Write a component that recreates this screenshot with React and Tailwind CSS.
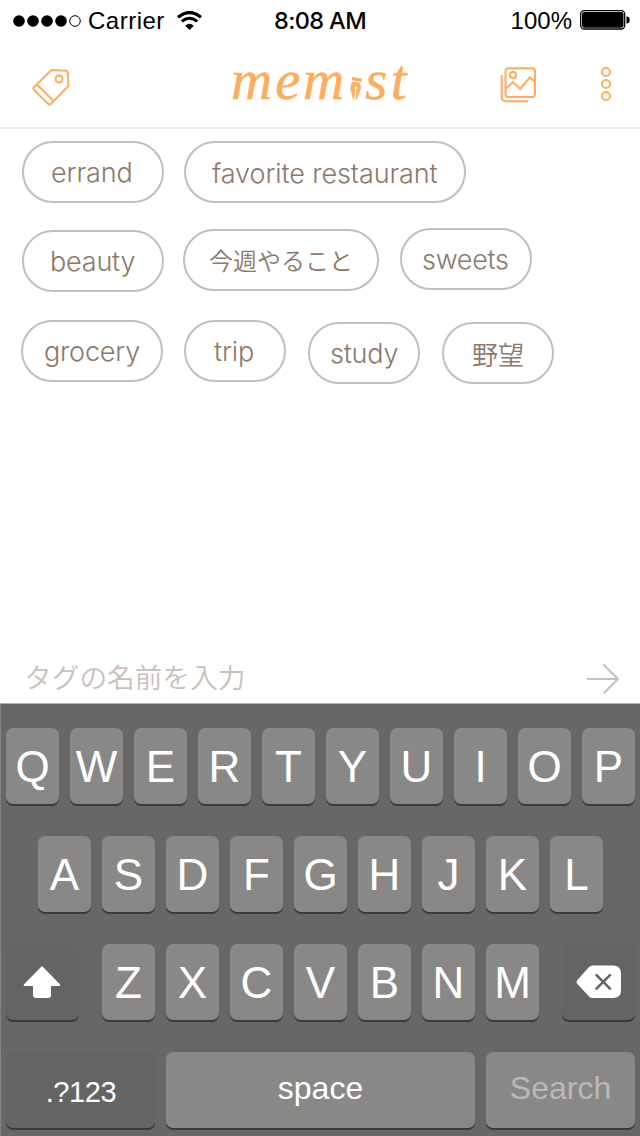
const latin = "font-['Inter','Liberation_Sans',sans-serif] font-light text-[27px]";
const cjk = "font-['Noto_Sans_CJK_JP',sans-serif] font-[350]";

const tagRows = [
  [
    { label: 'errand', box: 'w-[142px] mt-[3px]', text: `${latin} pl-[27px] pt-[10px] tracking-[-0.1px]` },
    { label: 'favorite restaurant', box: 'w-[282px] mt-[3px] ml-[20px]', text: `${latin} pl-[26px] pt-[11px] tracking-[-0.1px]` },
  ],
  [
    { label: 'beauty', box: 'w-[142px] mt-[3px]', text: `${latin} pl-[26px] pt-[10px] tracking-[-0.2px]` },
    { label: '今週やること', box: 'w-[196px] mt-[2px] ml-[19px]', text: `${cjk} text-[24px] pl-[24px] pt-[9px]` },
    { label: 'sweets', box: 'w-[132px] mt-[1px] ml-[21px]', text: `${latin} pl-[20px] pt-[10px] tracking-[-0.3px]` },
  ],
  [
    { label: 'grocery', box: 'w-[142px] mt-[3.5px] -ml-px', text: `${latin} pl-[21px] pt-[10px] tracking-[-0.2px]` },
    { label: 'trip', box: 'w-[102px] mt-[3.5px] ml-[21px]', text: `${latin} pl-[28px] pt-[10px] tracking-[-0.1px]` },
    { label: 'study', box: 'w-[112px] mt-[5.5px] ml-[22px]', text: `${latin} pl-[20px] pt-[10px] tracking-[-0.2px]` },
    { label: '野望', box: 'w-[112px] mt-[5.5px] ml-[22px]', text: `${cjk} text-[26px] pl-[28px] pt-[10px]` },
  ],
];

function Tag({ label, box, text }) {
  return (
    <button className={`h-[62px] shrink-0 rounded-full border-2 border-[#c5bdb6] text-left text-[#8b7869] ${box}`}>
      <span className={`block h-full whitespace-nowrap leading-[40px] ${text}`}>{label}</span>
    </button>
  );
}

function StatusBar() {
  return (
    <div className="grid h-10 grid-cols-3 items-center font-['Liberation_Sans',Arial,sans-serif] text-[24px] leading-[40px] text-black">
      <div className="flex items-center pt-px pl-[13px]">
        <svg className="-mt-px" width="69" height="14" viewBox="0 0 69 14">
          {[6, 20, 34, 48].map((x) => <circle key={x} cx={x} cy="7" r="5.8" />)}
          <circle cx="62" cy="7" r="5.3" fill="none" stroke="#000" strokeWidth="1" />
        </svg>
        <span className="ml-[6px] w-[78px] whitespace-nowrap tracking-[0.500px]">Carrier</span>
        <svg className="-mt-px ml-[11px]" width="25" height="20" viewBox="0 0 25 20" fill="none" stroke="#000">
          <path d="M1 6.2Q12.500-3.200 24 6.200" strokeWidth="3.3" />
          <path d="M4.800 10.400Q12.500 4.200 20.200 10.400" strokeWidth="3" />
          <path d="M8.200 14.700Q12.500 11 16.800 14.700L12.500 19Z" fill="#000" stroke="none" />
        </svg>
      </div>
      <div className="pt-px text-center font-['Inter',sans-serif] text-[23.500px] font-medium tracking-[-0.6px]">8:08 AM</div>
      <div className="flex items-center justify-end pt-px pr-[10px]">
        <span className="mr-[8px]">100%</span>
        <svg className="-mt-[2px]" width="50" height="20" viewBox="0 0 50 20">
          <rect x="0.700" y="0.700" width="44" height="18.300" rx="3.500" fill="none" stroke="#000" strokeWidth="1.300" />
          <rect x="2" y="2" width="41.500" height="15.700" rx="2.200" />
          <path d="M46.500 6.300q3.200 .4 3.200 3.600t-3.200 3.600z" />
        </svg>
      </div>
    </div>
  );
}

function Header() {
  return (
    <header className="flex h-[89px] items-start border-b-2 border-[#ececec] text-[#ffac5c]">
      <svg className="mt-[27px] ml-[31px] shrink-0" width="40" height="40" viewBox="0 0 40 40" fill="none" stroke="currentColor" strokeWidth="2" strokeLinejoin="round">
        <path d="M20.500 3L35 3.800Q36.500 4 36.700 5.500L37.500 19L20 36.700Q18.500 38.200 17 36.700L3.200 23Q1.800 21.500 3.200 20Z" />
        <path d="M6 17.500L22.500 34" />
        <circle cx="28" cy="12" r="3.500" />
      </svg>
      <div className="ml-[160px] flex h-[87px] w-[179px] items-start font-['Liberation_Serif',serif] text-[57px] leading-[80px] italic [-webkit-text-stroke:0.500px_#ffac5c]">
        <span className="w-[120px] tracking-[2.800px]">mem</span>
        <svg className="mt-[36px] shrink-0" width="14" height="25" viewBox="0 0 14 25" fill="currentColor">
          <path d="M2.200 1L12.200 2.700L11.600 5.800L1.600 4.200Z" />
          <path d="M2.400 5.800L9.800 6.800Q11.600 10.500 10.600 13.500L6.600 23.800H3.600Q0.500 15 0.500 12.500Q0.600 8.500 2.400 5.800Z" />
          <path d="M5.900 11.500L4.900 24.500" stroke="#fff" strokeWidth="1.300" />
          <circle cx="5.900" cy="12" r="1.400" fill="#fff" />
        </svg>
        <span className="ml-px tracking-[3.500px]">st</span>
      </div>
      <svg className="mt-[26px] ml-[90px] shrink-0" width="37" height="38" viewBox="0 0 37 38" fill="none" stroke="currentColor" strokeWidth="2">
        <rect x="5.500" y="2.200" width="29.500" height="28.800" rx="3" />
        <circle cx="13" cy="9" r="3.100" />
        <path d="M6 22.500L13 16.200L20.200 23L29.800 11.500L35 16" />
        <path d="M1.700 9V31Q1.700 35.300 6 35.300H28" />
      </svg>
      <svg className="mt-[26px] ml-[62px] shrink-0" width="14" height="36" viewBox="0 0 14 36" fill="none" stroke="currentColor" strokeWidth="2">
        <circle cx="7" cy="6" r="4.100" />
        <circle cx="7" cy="18" r="4.100" />
        <circle cx="7" cy="30" r="4.100" />
      </svg>
    </header>
  );
}

function Key({ children, className = 'w-[53px] bg-[#898886]', label }) {
  return (
    <button aria-label={label} className={`flex h-[76px] shrink-0 justify-center rounded-[7px] text-[44px] leading-[78px] text-white shadow-[0_2px_0_#3b3a39] ${className}`}>
      {children}
    </button>
  );
}

function Letters({ letters }) {
  return letters.split('').map((c) => <Key key={c}>{c}</Key>);
}

function Keyboard() {
  return (
    <div className="flex h-[433px] flex-col gap-8 border-t border-l border-t-[#b5b4b3] border-l-[#858483] bg-[#686765] pt-[24px] pl-[5px] font-['Liberation_Sans',Arial,sans-serif]">
      <div className="flex gap-[11px]"><Letters letters="QWERTYUIOP" /></div>
      <div className="flex gap-[11px] pl-8"><Letters letters="ASDFGHJKL" /></div>
      <div className="flex gap-[11px]">
        <Key label="shift" className="mr-3 w-[73px] bg-[#646464]">
          <svg className="mt-[22px] -ml-px" width="38" height="33" viewBox="0 0 38 33" fill="#fff">
            <path d="M19 0L37.200 18.500Q37.800 20 36 20H28V29Q28 32 25 32H13Q10 32 10 29V20H2Q0.200 20 0.800 18.500Z" />
          </svg>
        </Key>
        <Letters letters="ZXCVBNM" />
        <Key label="delete" className="ml-3 w-[73px] bg-[#646464]">
          <svg className="mt-[21px]" width="46" height="34" viewBox="0 0 46 34">
            <path d="M16.500 0.500H37Q45 0.500 45 8.500V25Q45 33 37 33H16.500Q14.500 33 13 31.500L1 18.500Q0 17 1 15.500L13 2Q14.500 0.500 16.500 0.500Z" fill="#fff" />
            <path d="M20.500 10.200L34 23.700M34 10.200L20.500 23.700" stroke="#646464" strokeWidth="2.600" strokeLinecap="round" />
          </svg>
        </Key>
      </div>
      <div className="flex gap-[11px]">
        <Key className="w-[149px] bg-[#646464]"><span className="pl-px text-[29px] leading-[80px] tracking-[-0.4px]">.?123</span></Key>
        <Key className="w-[309px] bg-[#898886]"><span className="text-[32px] leading-[73px]">space</span></Key>
        <Key className="w-[149px] bg-[#898886] shadow-[0_2px_0_#1b1a19]"><span className="text-[32px] leading-[73px] text-[#bab9b8]">Search</span></Key>
      </div>
    </div>
  );
}

export default function App() {
  return (
    <div className="flex h-[1136px] w-[640px] flex-col overflow-hidden bg-white">
      <StatusBar />
      <Header />
      <main className="flex flex-1 flex-col pt-[9px] pl-[22px]">
        {tagRows.map((row, i) => (
          <div key={i} className="flex h-[89px] shrink-0 items-start">
            {row.map((tag) => <Tag key={tag.label} {...tag} />)}
          </div>
        ))}
      </main>
      <div className="flex h-[52px] shrink-0 items-center justify-between pr-[20px] pl-[24px]">
        <span className={`${cjk} -mt-[2px] text-[27.700px] leading-[50px] text-[#c9c0ba]`}>タグの名前を入力</span>
        <svg className="mt-[4px]" width="34" height="32" viewBox="0 0 34 32" fill="none" stroke="#c9c0ba" strokeWidth="2">
          <path d="M1 16H32M17.500 1.500L32 16L17.500 30.500" />
        </svg>
      </div>
      <Keyboard />
    </div>
  );
}
